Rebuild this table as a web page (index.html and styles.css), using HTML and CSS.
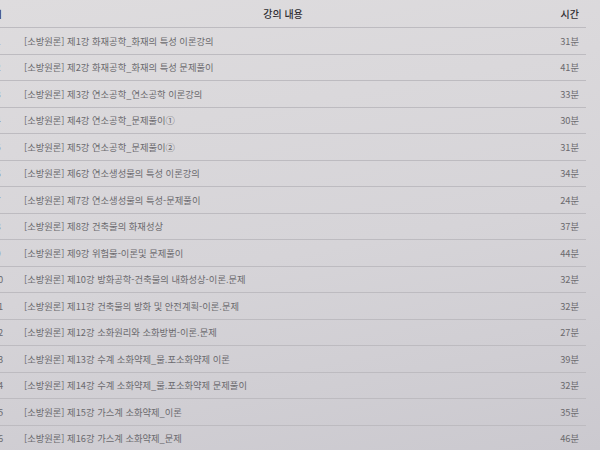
FILE: index.html
```html
<!DOCTYPE html>
<html lang="ko">
<head>
    <meta charset="UTF-8">
    <meta name="viewport" content="width=device-width, initial-scale=1.0">
    <title>강의 목록</title>
    <link rel="stylesheet" href="styles.css">
</head>
<body>
<!-- 강의 목록 표 -->
<div class="lecture-table">
    <div class="row head">
        <div class="num">차시</div>
        <div class="title">강의 내용</div>
        <div class="time">시간</div>
    </div>
    <div class="row"><div class="num">1</div><div class="title">[소방원론] 제1강 화재공학_화재의 특성 이론강의</div><div class="time">31분</div></div>
    <div class="row"><div class="num">2</div><div class="title">[소방원론] 제2강 화재공학_화재의 특성 문제풀이</div><div class="time">41분</div></div>
    <div class="row"><div class="num">3</div><div class="title">[소방원론] 제3강 연소공학_연소공학 이론강의</div><div class="time">33분</div></div>
    <div class="row"><div class="num">4</div><div class="title">[소방원론] 제4강 연소공학_문제풀이①</div><div class="time">30분</div></div>
    <div class="row"><div class="num">5</div><div class="title">[소방원론] 제5강 연소공학_문제풀이②</div><div class="time">31분</div></div>
    <div class="row"><div class="num">6</div><div class="title">[소방원론] 제6강 연소생성물의 특성 이론강의</div><div class="time">34분</div></div>
    <div class="row"><div class="num">7</div><div class="title">[소방원론] 제7강 연소생성물의 특성-문제풀이</div><div class="time">24분</div></div>
    <div class="row"><div class="num">8</div><div class="title">[소방원론] 제8강 건축물의 화재성상</div><div class="time">37분</div></div>
    <div class="row"><div class="num">9</div><div class="title">[소방원론] 제9강 위험물-이론및 문제풀이</div><div class="time">44분</div></div>
    <div class="row"><div class="num">10</div><div class="title">[소방원론] 제10강 방화공학-건축물의 내화성상-이론.문제</div><div class="time">32분</div></div>
    <div class="row"><div class="num">11</div><div class="title">[소방원론] 제11강 건축물의 방화 및 안전계획-이론.문제</div><div class="time">32분</div></div>
    <div class="row"><div class="num">12</div><div class="title">[소방원론] 제12강 소화원리와 소화방법-이론.문제</div><div class="time">27분</div></div>
    <div class="row"><div class="num">13</div><div class="title">[소방원론] 제13강 수계 소화약제_물.포소화약제 이론</div><div class="time">39분</div></div>
    <div class="row"><div class="num">14</div><div class="title">[소방원론] 제14강 수계 소화약제_물.포소화약제 문제풀이</div><div class="time">32분</div></div>
    <div class="row"><div class="num">15</div><div class="title">[소방원론] 제15강 가스계 소화약제_이론</div><div class="time">35분</div></div>
    <div class="row"><div class="num">16</div><div class="title">[소방원론] 제16강 가스계 소화약제_문제</div><div class="time">46분</div></div>
</div>
</body>
</html>
```

FILE: styles.css
```css
/* 페이지 */
html, body {
    margin: 0;
    height: 100%;
    overflow: hidden;
}

body {
    background: linear-gradient(170deg, #dedcde 0%, #d6d4d8 55%, #cbc9cf 100%);
    font-family: "Noto Sans CJK KR", "Noto Sans", sans-serif;
    font-size: 9.3px;
    color: #6b6a6e;
}

/* 강의 목록 표 */
.lecture-table {
    width: 600px;
    margin-left: -14px;
}

.row {
    display: grid;
    grid-template-columns: 24px 546px 30px;
    align-items: center;
    height: 26.5px;
    border-bottom: 1px solid #bdbbc0;
    box-sizing: border-box;
}

.row.head {
    height: 28px;
    color: #2f2e33;
    font-weight: 500;
    font-size: 10px;
}

.num {
    text-align: center;
}

.head .num {
    justify-self: end;
    margin-right: 8px;
    white-space: nowrap;
}

.title {
    padding-left: 14px;
    white-space: nowrap;
}

.head .title {
    text-align: center;
    padding-left: 0;
}

.time {
    text-align: right;
    padding-right: 7px;
    white-space: nowrap;
}
```
